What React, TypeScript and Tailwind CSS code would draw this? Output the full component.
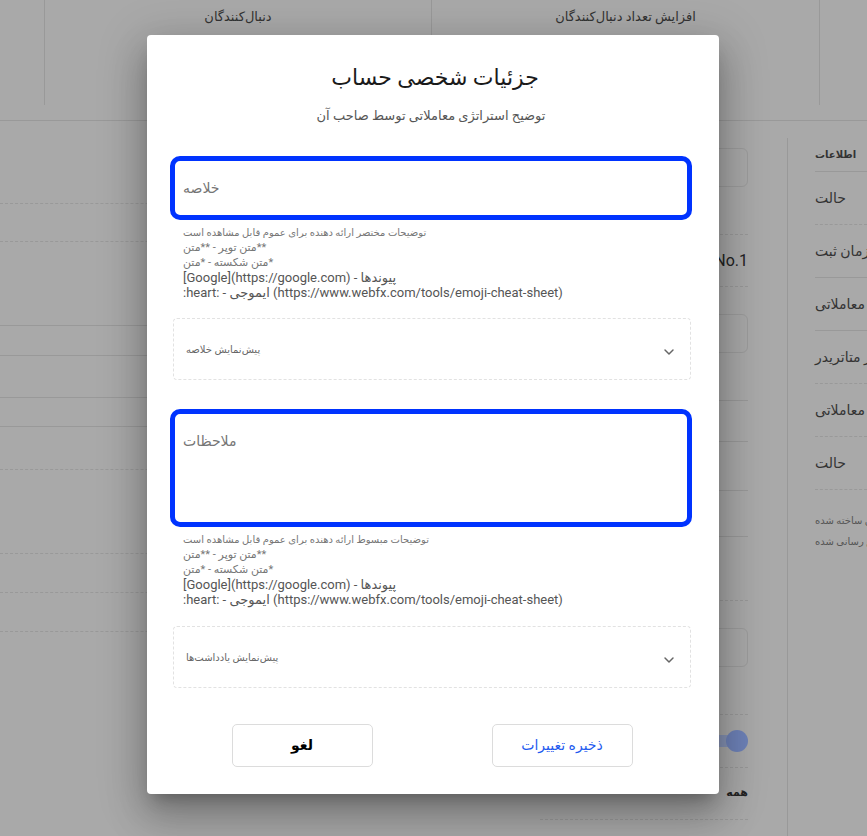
import { ChevronDown } from "lucide-react";

const font = "font-['Roboto','DejaVu_Sans',sans-serif]";

function HelpText({ first }: { first: string }) {
  return (
    <div className="pl-[13px] mt-[5px] text-left" dir="ltr">
      <p className="text-[10px] leading-[15px] text-[#777]">{first}</p>
      <p className="text-[11px] leading-[15px] text-[#777]">
        <bdi>متن</bdi>** - <bdi>متن توپر</bdi>**
      </p>
      <p className="text-[11px] leading-[15px] text-[#777]">
        <bdi>متن</bdi>* - <bdi>متن شکسته</bdi>*
      </p>
      <p className="text-[13px] leading-[15px] text-[#555]">
        [Google](https://google.com) - <bdi>پیوندها</bdi>
      </p>
      <p className="text-[13px] leading-[15px] text-[#555]">
        :heart: - <bdi>ایموجی</bdi> (https://www.webfx.com/tools/emoji-cheat-sheet)
      </p>
    </div>
  );
}

function Preview({ label }: { label: string }) {
  return (
    <div className="ml-[3px] mr-[1px] h-[62px] rounded-[4px] border border-dashed border-[#e2e2e2] flex items-center justify-between pl-[12px] pr-[13px]">
      <span className="text-[10px] text-[#666]">{label}</span>
      <ChevronDown className="w-4 h-4 text-[#666] mt-[6px]" strokeWidth={2.2} />
    </div>
  );
}

function SideRow({ label, line }: { label: string; line: "solid" | "dashed" }) {
  return (
    <div
      className={
        line === "solid"
          ? "h-[53px] flex items-center border-b border-[#999] whitespace-nowrap"
          : "h-[53px] flex items-center border-b border-dashed border-[#999] whitespace-nowrap"
      }
    >
      <span className="text-[14px] text-[#333]">{label}</span>
    </div>
  );
}

export default function App() {
  return (
    <div className={`relative w-[867px] h-[836px] overflow-hidden bg-[#a9a9a9] ${font}`}>
      {/* page behind the dialog */}
      <div className="flex flex-col h-full">
        <div className="flex h-[105px]">
          <div className="w-[45px] border-r border-[#999]" />
          <div className="w-[387px] border-r border-[#999] text-center pt-[7px] text-[13px] text-[#333]">
            دنبال‌کنندگان
          </div>
          <div className="w-[388px] border-r border-[#999] text-center pt-[7px] text-[13px] text-[#333]">
            افزایش تعداد دنبال‌کنندگان
          </div>
          <div className="flex-1" />
        </div>
        <div className="h-[16px] border-b border-[#999]" />

        <div className="flex flex-1">
          {/* main column */}
          <div className="w-[748px] flex">
            <div className="w-[540px] flex flex-col">
              <div className="h-[83px] border-b border-dashed border-[#999]" />
              <div className="h-[38px] border-b border-dashed border-[#999]" />
              <div className="h-[84px] border-b border-[#999]" />
              <div className="h-[30px] border-b border-[#999]" />
              <div className="h-[42px] border-b border-[#999]" />
              <div className="h-[29px] border-b border-[#999]" />
              <div className="h-[43px] border-b border-dashed border-[#999]" />
              <div className="h-[84px] border-b border-dashed border-[#999]" />
              <div className="h-[39px] border-b border-dashed border-[#999]" />
              <div className="h-[39px] border-b border-dashed border-[#999]" />
            </div>
            <div className="w-[208px] flex flex-col">
              <div className="h-[27px]" />
              <div className="h-[39px] rounded-[6px] border border-[#9c9c9c]" />
              <div className="h-[48px] border-b border-dashed border-[#999]" />
              <div className="h-[52px] border-b border-dashed border-[#999] flex items-center justify-end">
                <span className="text-[16px] text-[#222]">No.1</span>
              </div>
              <div className="h-[27px]" />
              <div className="h-[39px] rounded-[6px] border border-[#9c9c9c]" />
              <div className="h-[48px] border-b border-[#999]" />
              <div className="h-[41px] border-b border-[#999]" />
              <div className="h-[49px] border-b border-[#999]" />
              <div className="h-[46px] border-b border-[#999]" />
              <div className="h-[64px] border-b border-dashed border-[#999]" />
              <div className="h-[27px]" />
              <div className="h-[39px] rounded-[6px] border border-[#9c9c9c]" />
              <div className="h-[48px] border-b border-dashed border-[#999]" />
              <div className="h-[53px] border-b border-dashed border-[#999] flex items-center justify-end">
                <div className="relative w-[40px] h-[22px] flex items-center">
                  <div className="w-[34px] h-[12px] rounded-full bg-[#8794b6]" />
                  <div className="absolute right-0 top-0 w-[22px] h-[22px] rounded-full bg-[#6e82b8]" />
                </div>
              </div>
              <div className="h-[52px] border-b border-dashed border-[#999] flex items-center justify-end">
                <span className="text-[11px] font-bold text-[#222]">همه</span>
              </div>
            </div>
          </div>
          <div className="w-[39px]" />

          {/* right sidebar */}
          <div className="flex-1 mt-[17px] border-l border-[#999] pl-[27px] overflow-hidden">
            <div className="h-[34px] flex items-center border-b border-[#999]">
              <span className="text-[10px] font-bold text-[#333]">اطلاعات</span>
            </div>
            <SideRow label="حالت" line="dashed" />
            <SideRow label="زمان ثبت" line="solid" />
            <SideRow label="حساب معاملاتی" line="solid" />
            <SideRow label="سرور متاتریدر" line="dashed" />
            <SideRow label="تجربه معاملاتی" line="dashed" />
            <SideRow label="حالت" line="dashed" />
            <div className="pt-[20px] text-[10px] leading-[21px] text-[#555] whitespace-nowrap">
              <p>زمان ساخته شده</p>
              <p>اطلاع رسانی شده</p>
            </div>
          </div>
        </div>
      </div>

      {/* dialog */}
      <div className="absolute left-[147px] top-[35px] w-[572px] bg-white rounded-[4px] shadow-[0_11px_15px_-7px_rgba(0,0,0,0.25),0_24px_38px_3px_rgba(0,0,0,0.18),0_9px_46px_8px_rgba(0,0,0,0.15)] pt-[28px] pb-[27px] pl-[23px] pr-[27px]">
        <h2 className="text-center text-[22px] leading-[30px] text-[#1a1a1a] font-normal pl-[8px]">جزئیات شخصی حساب</h2>
        <p className="text-center mt-[14px] text-[13px] leading-[18px] text-[#555]">
          توضیح استراتژی معاملاتی توسط صاحب آن
        </p>

        <div className="mt-[31px] h-[64px] rounded-[10px] border-[5px] border-[#0033ff] pl-[8px] pt-[17px]">
          <textarea
            rows={1}
            placeholder="خلاصه"
            className="w-full resize-none outline-none bg-transparent text-[14px] leading-[20px] placeholder:text-[#757575]"
          />
        </div>
        <HelpText first="توضیحات مختصر ارائه دهنده برای عموم قابل مشاهده است" />

        <div className="mt-[18px]">
          <Preview label="پیش‌نمایش خلاصه" />
        </div>

        <div className="mt-[29px] h-[118px] rounded-[10px] border-[5px] border-[#0033ff] pl-[8px] pt-[17px]">
          <textarea
            rows={3}
            placeholder="ملاحظات"
            className="w-full resize-none outline-none bg-transparent text-[14px] leading-[20px] placeholder:text-[#757575]"
          />
        </div>
        <HelpText first="توضیحات مبسوط ارائه دهنده برای عموم قابل مشاهده است" />

        <div className="mt-[19px]">
          <Preview label="پیش‌نمایش یادداشت‌ها" />
        </div>

        <div className="mt-[36px] flex justify-center gap-[119px] ml-[2px]">
          <button className="w-[141px] h-[43px] rounded-[5px] border border-[#dcdcdc] bg-white text-[14px] font-bold text-black">
            لغو
          </button>
          <button className="w-[141px] h-[43px] rounded-[5px] border border-[#dcdcdc] bg-white text-[14px] text-[#1f5bef]">
            ذخیره تغییرات
          </button>
        </div>
      </div>
    </div>
  );
}
